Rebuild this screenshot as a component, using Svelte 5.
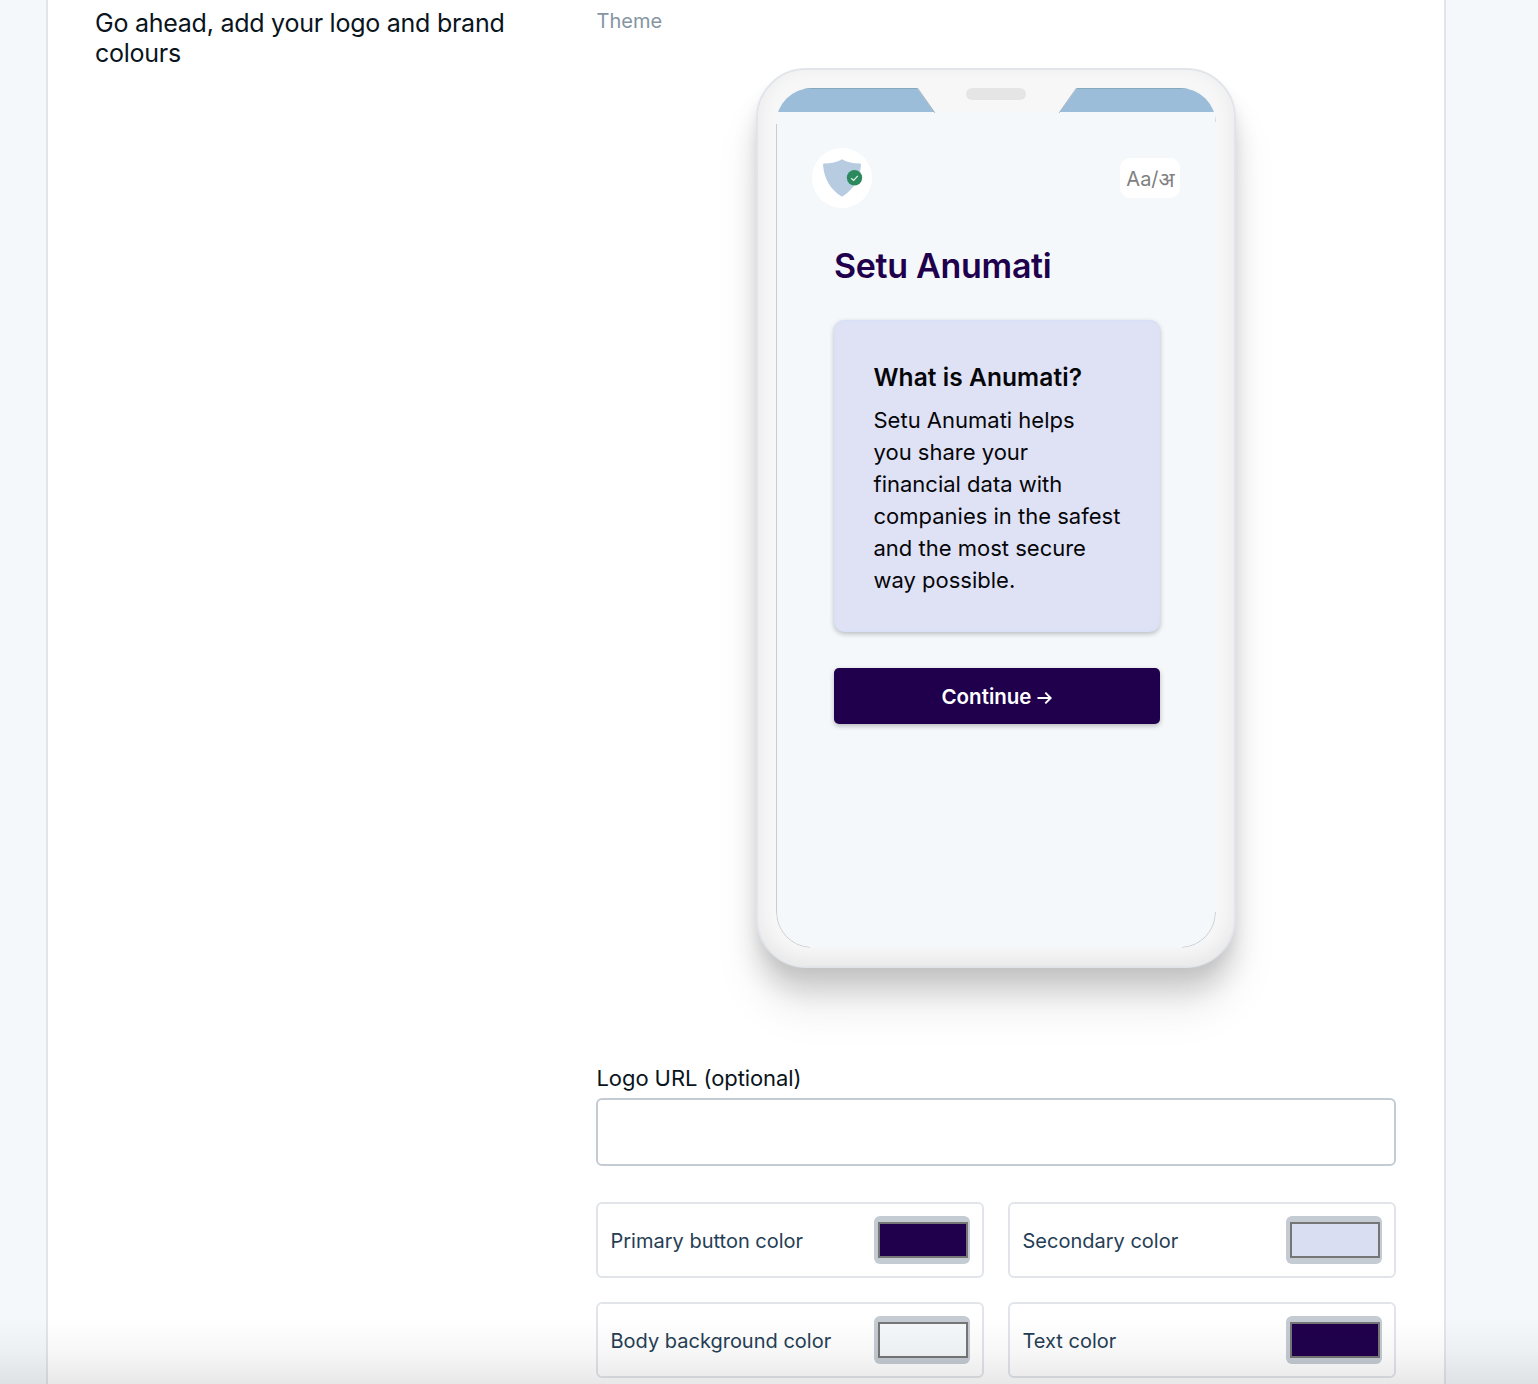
<script lang="ts">
	const colors = [
		{ label: 'Primary button color', value: '#20004c' },
		{ label: 'Secondary color', value: '#d9def2' },
		{ label: 'Body background color', value: '#f4f8fb' },
		{ label: 'Text color', value: '#20004c' }
	];

	const about = [
		'Setu Anumati helps',
		'you share your',
		'financial data with',
		'companies in the safest',
		'and the most secure',
		'way possible.'
	];

	let logoUrl = $state('');
</script>

<div class="page">
	<main class="panel">
		<h2 class="intro">Go ahead, add your logo and brand colours</h2>

		<section class="settings">
			<div class="theme-label">Theme</div>

			<div class="phone">
				<div class="screen">
					<div class="status-bar"></div>
					<svg class="notch" width="160" height="26" viewBox="0 0 160 26">
						<path d="M0 0H160L142 25H18Z" fill="#f7f7f7" />
						<path d="M.5 0 18 25M159.5 0 142 25" stroke="#8fa5b2" stroke-width=".7" fill="none" />
						<rect x="49" y="0" width="60" height="12" rx="6" fill="#e5e5e5" />
					</svg>
					<svg class="edge" width="440" height="860" viewBox="0 0 440 860">
						<path
							d="M.5 36V824A35.5 35.5 0 0 0 34 859.5M406 859.5A35.5 35.5 0 0 0 439.5 824M439.5 34V26"
							fill="none"
							stroke="#c3c7ca"
							stroke-width=".9"
						/>
					</svg>
					<div class="toolbar">
						<div class="logo">
							<svg width="60" height="60" viewBox="0 0 60 60">
								<path
									d="M30 11.2C35 14.4 41 15.4 47.8 15.4Q49 15.4 49 16.8C48 30 42.5 41 30 48.8C17.5 41 12 30 11 16.8Q11 15.4 12.2 15.4C19 15.4 25 14.4 30 11.2Z"
									fill="#b7cce1"
								/>
								<circle cx="42.5" cy="29.7" r="7.7" fill="#2b895d" />
								<path d="m39.2 30.3 2.4 2.2 4.2-4.6" fill="none" stroke="#e3f2eb" stroke-width="1.2" />
							</svg>
						</div>
						<div class="language">Aa/<span>अ</span></div>
					</div>
					<div class="content">
						<h1>Setu Anumati</h1>
						<article class="about">
							<h3>What is Anumati?</h3>
							<p>
								{#each about as line}
									<span>{line}</span>
								{/each}
							</p>
						</article>
						<button class="continue">
							Continue
							<svg width="15" height="14" viewBox="0 0 15 14">
								<path d="M.5 7H13.5M8.3 1.6 13.7 7 8.3 12.4" fill="none" stroke="#fff" stroke-width="2" />
							</svg>
						</button>
					</div>
				</div>
			</div>

			<label class="url-label" for="logo-url">Logo URL (optional)</label>
			<input id="logo-url" class="url-field" bind:value={logoUrl} />

			<div class="colors">
				{#each colors as color}
					<div class="color">
						<span>{color.label}</span>
						<div class="swatch">
							<div class="swatch-fill" style:background-color={color.value}></div>
						</div>
					</div>
				{/each}
			</div>
		</section>
	</main>
	<div class="fade"></div>
</div>

<style>
	:global(body) {
		margin: 0;
		overflow: hidden;
	}

	.page,
	.page * {
		box-sizing: border-box;
	}

	.page {
		position: relative;
		width: 1538px;
		height: 1384px;
		overflow: hidden;
		padding: 0 92px 0 46px;
		background: #f4f8fb;
		font-family: Inter, 'Noto Sans', sans-serif;
		color: #0a141c;
	}

	h1,
	h2,
	h3,
	p {
		margin: 0;
	}

	.panel {
		display: grid;
		grid-template-columns: 451px 800px;
		column-gap: 50px;
		height: 1384px;
		padding: 0 48px 0 47px;
		border: solid #e1e5ea;
		border-width: 0 2px;
		background: #fff;
	}

	.intro {
		padding-top: 8px;
		font-size: 25px;
		font-weight: 400;
		line-height: 30px;
		letter-spacing: -0.25px;
	}

	.settings {
		display: flex;
		flex-direction: column;
		min-width: 0;
	}

	.theme-label {
		height: 68px;
		padding: 9px 0 0 0.5px;
		font-size: 20px;
		line-height: 24px;
		color: #8595a2;
	}

	.phone {
		flex: none;
		align-self: center;
		width: 480px;
		height: 900px;
		padding: 18px;
		border: 2px solid #e1e5ea;
		border-radius: 50px;
		background: #f7f7f7;
		box-shadow:
			inset 0 -6px 20px rgba(0, 0, 0, 0.07),
			0 8px 12px rgba(0, 0, 0, 0.05),
			0 24px 24px rgba(0, 0, 0, 0.13),
			0 40px 46px rgba(0, 0, 0, 0.08);
	}

	.screen {
		position: relative;
		height: 860px;
		overflow: hidden;
		border-radius: 36px;
		background: #f4f8fb;
	}

	.status-bar {
		height: 24px;
		border-top: 1px solid #87a9bd;
		background: #9bbdd9;
	}

	.notch {
		position: absolute;
		top: 0;
		left: 141px;
	}

	.edge {
		position: absolute;
		inset: 0;
		pointer-events: none;
	}

	.toolbar {
		display: flex;
		justify-content: space-between;
		align-items: center;
		padding: 36px 36px 0;
	}

	.logo {
		width: 60px;
		height: 60px;
		border-radius: 50%;
		background: #fff;
	}

	.language {
		display: flex;
		align-items: center;
		justify-content: center;
		width: 60px;
		height: 40px;
		padding: 2px 0 0 1px;
		border-radius: 10px;
		background: #fff;
		font-size: 20px;
		color: #808080;
	}

	.language span {
		font-size: 21px;
	}

	.content {
		padding: 36px 56px 0 58px;
	}

	h1 {
		height: 76px;
		font-size: 34px;
		font-weight: 600;
		line-height: 44px;
		letter-spacing: -0.3px;
		color: #20004c;
	}

	.about {
		height: 312px;
		padding: 36px 0 0 37.5px;
		border: 2px solid #dae0f5;
		border-radius: 10px;
		background: #dfe2f5;
		box-shadow: 0 2px 5px rgba(0, 0, 0, 0.24);
		color: #060609;
	}

	h3 {
		font-size: 24.5px;
		font-weight: 600;
		line-height: 38px;
		letter-spacing: 0.08px;
	}

	.about p {
		margin-top: 8px;
		font-size: 22px;
		line-height: 32px;
	}

	.about p span {
		display: block;
		white-space: nowrap;
	}

	.continue {
		display: flex;
		align-items: center;
		justify-content: center;
		gap: 6px;
		width: 100%;
		height: 56px;
		margin-top: 36px;
		padding: 0;
		border: 0;
		border-radius: 5px;
		background: #20004c;
		box-shadow: 0 2px 5px rgba(0, 0, 0, 0.25);
		font: 600 20.5px Inter, sans-serif;
		color: #fff;
	}

	.continue svg {
		margin-top: 4px;
	}

	.url-label {
		margin-top: 96px;
		padding-left: 0.5px;
		font-size: 22px;
		line-height: 28px;
		letter-spacing: -0.08px;
	}

	.url-field {
		flex: none;
		width: 100%;
		height: 68px;
		margin-top: 6px;
		padding: 0 16px;
		border: 2px solid #c4cbd2;
		border-radius: 6px;
		background: #fff;
		font-size: 22px;
		outline: none;
	}

	.colors {
		display: grid;
		grid-template-columns: 1fr 1fr;
		gap: 24px;
		margin-top: 36px;
	}

	.color {
		display: flex;
		align-items: center;
		justify-content: space-between;
		height: 76px;
		padding: 0 12px;
		border: 2px solid #e1e5ea;
		border-radius: 6px;
		font-size: 20px;
		color: #253e55;
	}

	.color span {
		padding: 2px 0 0 0.5px;
	}

	.swatch {
		width: 96px;
		height: 48px;
		padding: 6px 2px 6px 4px;
		border-radius: 6px;
		background: #c4cbd3;
	}

	.swatch-fill {
		height: 36px;
		border: 2px solid #767676;
	}

	.fade {
		position: absolute;
		inset: auto 0 0;
		height: 66px;
		background: linear-gradient(rgba(0, 0, 0, 0), rgba(0, 0, 0, 0.03) 50%, rgba(0, 0, 0, 0.09));
		pointer-events: none;
	}
</style>
